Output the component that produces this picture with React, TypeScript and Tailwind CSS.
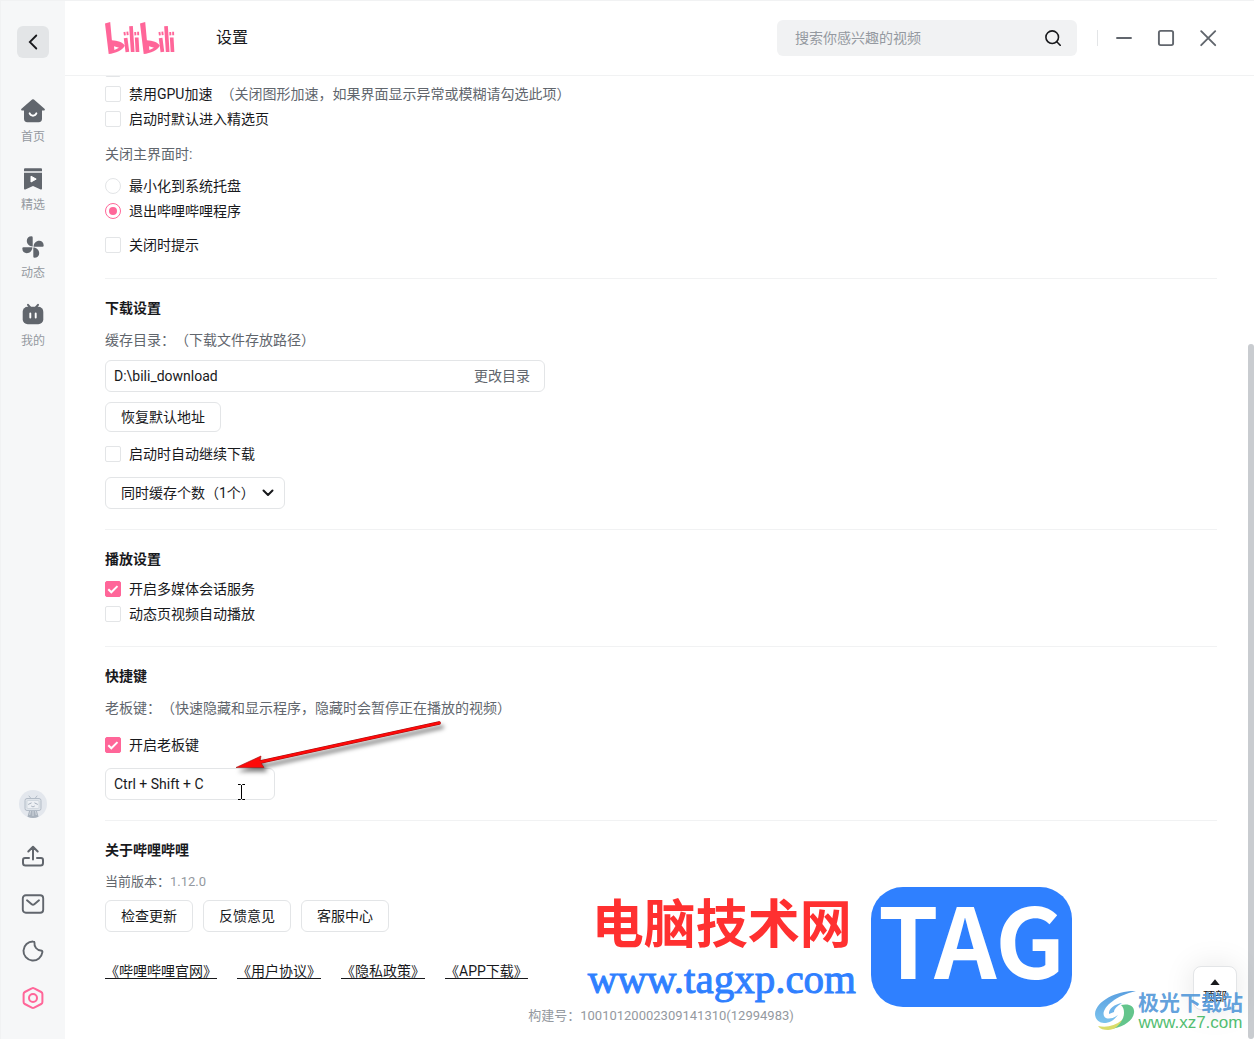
import React, { useState } from "react";

/**
 * @interface OptionProps.
 */

interface OptionProps {
  label: string;
  hint?: string;
  defaultChecked?: boolean;
}

interface RadioProps {
  label: string;
  checked: boolean;
  onSelect: () => void;
}

interface SectionProps {
  title: string;
  children: React.ReactNode;
  last?: boolean;
}

interface NavItem {
  label: string;
  icon: React.ReactNode;
}

const navItems: NavItem[] = [
  {
    label: "首页",
    icon: (
      <svg width="24" height="24" viewBox="0 0 24 24">
        <path d="M11.1 0.6a1.4 1.4 0 0 1 1.8 0l10.6 9.1c.8.7.3 1.9-.7 1.9H21v8.2a3.4 3.4 0 0 1-3.4 3.4H6.4A3.4 3.4 0 0 1 3 19.800v-8.200H1.200c-1 0-1.500-1.200-.7-1.900z" fill="#61666d" />
        <path d="M8.600 14.300a3.600 3.600 0 0 0 6.800 0" fill="none" stroke="#fff" strokeWidth="1.900" strokeLinecap="round" />
      </svg>
    ),
  },
  {
    label: "精选",
    icon: (
      <svg width="24" height="24" viewBox="0 0 24 24">
        <path d="M4 1.300h16a1 1 0 0 1 1 1v2H3v-2a1 1 0 0 1 1-1z" fill="#61666d" />
        <path d="M3 5.800h18v15.800a.9.9 0 0 1-1.300.8L12 19l-7.700 3.400a.9.9 0 0 1-1.300-.8z" fill="#61666d" />
        <path d="M10 9.200l5.200 2.900L10 15z" fill="#fff" stroke="#fff" strokeLinejoin="round" />
      </svg>
    ),
  },
  {
    label: "动态",
    icon: (
      <svg width="24" height="24" viewBox="0 0 24 24" fill="#61666d">
        <path d="M11.700 11.400V2.500a1.200 1.200 0 0 0-1.200-1.200C7.600 1.300 5.800 3.300 5.800 5.700c0 3.200 2.600 5.700 5.900 5.700z" />
        <path d="M12.600 11.700h8.900a1.200 1.200 0 0 0 1.200-1.200c0-2.900-2-4.700-4.400-4.700-3.200 0-5.700 2.600-5.700 5.900z" />
        <path d="M12.300 12.600v8.900a1.200 1.200 0 0 0 1.200 1.200c2.900 0 4.700-2 4.700-4.400 0-3.200-2.600-5.700-5.900-5.700z" />
        <path d="M11.400 12.300H2.500a1.200 1.200 0 0 0-1.200 1.200c0 2.900 2 4.700 4.400 4.700 3.200 0 5.700-2.600 5.700-5.900z" />
      </svg>
    ),
  },
  {
    label: "我的",
    icon: (
      <svg width="24" height="24" viewBox="0 0 24 24">
        <path d="M7 1.800l2.200 2.700M17 1.800l-2.200 2.700" stroke="#61666d" strokeWidth="2" strokeLinecap="round" />
        <rect x="1.700" y="3.800" width="20.600" height="17.400" rx="5" fill="#61666d" />
        <path d="M9.300 10.500v4M14.700 10.500v4" stroke="#fff" strokeWidth="1.900" strokeLinecap="round" />
      </svg>
    ),
  },
];

const Logo: React.FC = () => (
  <svg width="70" height="32" viewBox="0 0 70 32" role="img" aria-label="bilibili">
    {[0, 35].map((x) => (
      <g key={x} transform={`translate(${x} 0)`} fill="#ff6699" stroke="#ff6699">
        <path
          stroke="none"
          fillRule="evenodd"
          d="M0 1.500L5.200 0l1.700 18.300c5.500.2 11.300 2.200 12.900 5.200C18.600 27.800 10 31.600 3.700 31.900zM9 24.200l.4 3.800 4.600-2.200z"
        />
        <path d="M20.600 16l1.800 14M26 4.200l1.700 25.800M31.700 15.500l.8 14.500" strokeWidth="3.700" />
        <path d="M19.400 10l.5 3.400M22.300 9.700l.4 3.400M30.200 10l.2 3.400M33.100 9.800l.1 3.400" strokeWidth="1.900" />
      </g>
    ))}
  </svg>
);

const Option: React.FC<OptionProps> = ({ label, hint, defaultChecked }) => (
  <div className="flex h-[25px] items-center">
    <label className="flex items-center gap-2">
      <span className="grid">
        <input
          type="checkbox"
          defaultChecked={defaultChecked}
          className="peer col-start-1 row-start-1 size-4 appearance-none rounded-xs border border-[#e3e5e7] bg-white checked:border-[#ff6699] checked:bg-[#ff6699]"
        />
        <svg viewBox="0 0 16 16" className="pointer-events-none invisible col-start-1 row-start-1 size-4 peer-checked:visible">
          <path d="M3.300 8.300l3 3 6.200-6.200" fill="none" stroke="#fff" strokeWidth="2" />
        </svg>
      </span>
      <span>{label}</span>
    </label>
    {hint && <span className="ml-2 text-[#61666d]">{hint}</span>}
  </div>
);

const Radio: React.FC<RadioProps> = ({ label, checked, onSelect }) => (
  <label className="flex h-[25px] items-center gap-2">
    <span className="grid place-items-center">
      <input
        type="radio"
        name="close-action"
        checked={checked}
        onChange={onSelect}
        className="peer col-start-1 row-start-1 size-4 appearance-none rounded-full border border-[#e3e5e7] bg-white checked:border-[#ff6699]"
      />
      <span className="pointer-events-none invisible col-start-1 row-start-1 size-2 rounded-full bg-[#ff6699] peer-checked:visible" />
    </span>
    <span>{label}</span>
  </label>
);

const Section: React.FC<SectionProps> = ({ title, children, last }) => (
  <section className={last ? "pt-[17px]" : "border-b border-[#f1f2f3] pt-[17px] pb-5"}>
    <h2 className="h-6 font-bold leading-6">{title}</h2>
    {children}
  </section>
);

const Sidebar: React.FC = () => (
  <aside className="flex w-[65px] shrink-0 flex-col items-center border-l border-[#f1f2f3] bg-[#f6f7f8] pt-[25px] pb-[29px]">
    <button type="button" aria-label="返回" className="grid size-8 place-items-center rounded-md bg-[#e3e5e7]">
      <svg width="16" height="16" viewBox="0 0 16 16" fill="none" stroke="#18191c" strokeWidth="1.800" strokeLinecap="round">
        <path d="M11.300 1.500L4.800 8l6.500 6.500" />
      </svg>
    </button>
    <nav className="mt-[41px] flex flex-col gap-[22px]">
      {navItems.map(({ label, icon }) => (
        <a key={label} href="#" className="flex flex-col items-center gap-[6px] text-xs leading-4 text-[#9499a0]">
          {icon}
          {label}
        </a>
      ))}
    </nav>
    <div className="mt-auto flex flex-col items-center gap-[23px]">
      <button type="button" aria-label="头像" className="mb-1">
        <svg width="28" height="28" viewBox="0 0 28 28">
          <circle cx="14" cy="14" r="14" fill="#e3e7ed" />
          <path d="M10 6l2 2.500M18 6l-2 2.500" stroke="#b3bcc7" strokeLinecap="round" />
          <rect x="6" y="8.500" width="16" height="12" rx="2" fill="#dfe4ea" stroke="#b3bcc7" />
          <rect x="8" y="10.500" width="12" height="8" rx="1" fill="#edf0f4" stroke="#c5ccd5" strokeWidth=".6" />
          <path d="M9.500 14.300l2.700-1.300M18.500 14.300L15.800 13M12.500 16.300q.8 1 1.500 0 .8 1 1.500 0" fill="none" stroke="#a7b1be" strokeLinecap="round" />
          <path d="M10 21h8l1.500 5.800a14 14 0 0 1-11 0z" fill="#a9b2bd" />
          <path d="M11.500 21l-.8 4M14 21v5M16.500 21l.8 4" stroke="#e3e7ed" strokeWidth=".7" />
        </svg>
      </button>
      <button type="button" aria-label="上传">
        <svg width="24" height="24" viewBox="0 0 24 24" fill="none" stroke="#61666d" strokeWidth="2" strokeLinecap="round" strokeLinejoin="round">
          <path d="M12 14.500V2M7.300 6.500L12 1.800l4.700 4.700M8 13H4a2 2 0 0 0-2 2v3a2.500 2.500 0 0 0 2.500 2.500h15a2.500 2.500 0 0 0 2.500-2.500v-3a2 2 0 0 0-2-2h-4" />
        </svg>
      </button>
      <button type="button" aria-label="消息">
        <svg width="24" height="24" viewBox="0 0 24 24" fill="none" stroke="#61666d" strokeWidth="1.900" strokeLinecap="round" strokeLinejoin="round">
          <rect x="1.800" y="3.300" width="20.400" height="17.400" rx="3" />
          <path d="M6 8.300l4.700 4a2 2 0 0 0 2.600 0l4.700-4" />
        </svg>
      </button>
      <button type="button" aria-label="夜间模式">
        <svg width="24" height="24" viewBox="0 0 24 24" fill="none" stroke="#61666d" strokeWidth="1.900" strokeLinejoin="round">
          <path d="M12.200 2.500c.8 0 1.300.5 1.300 1.300a6.800 6.800 0 0 0 6.300 7.700c1.200.1 1.800.7 1.600 1.700A9.500 9.500 0 1 1 12.200 2.500z" />
        </svg>
      </button>
      <button type="button" aria-label="设置">
        <svg width="24" height="24" viewBox="0 0 24 24" fill="none" stroke="#ff6699" strokeWidth="2" strokeLinejoin="round">
          <path d="M10.800 2.300a2.400 2.400 0 0 1 2.400 0l7 3.700a2.200 2.200 0 0 1 1.200 2v8a2.200 2.200 0 0 1-1.200 2l-7 3.700a2.400 2.400 0 0 1-2.400 0l-7-3.700a2.200 2.200 0 0 1-1.200-2V8a2.200 2.200 0 0 1 1.200-2z" />
          <circle cx="12" cy="12" r="4" />
        </svg>
      </button>
    </div>
  </aside>
);

const Header: React.FC = () => (
  <header className="flex h-[75px] shrink-0 items-center border-b border-[#f1f2f3] pr-[34px] pl-10">
    <Logo />
    <h1 className="ml-[41px] text-base">设置</h1>
    <form className="ml-auto flex h-9 w-[300px] items-center rounded-md bg-[#f1f2f3] pr-4 pl-[18px]">
      <input
        type="search"
        aria-label="搜索"
        placeholder="搜索你感兴趣的视频"
        className="min-w-0 flex-1 bg-transparent outline-none placeholder:text-[#9499a0]"
      />
      <button type="button" aria-label="搜索视频">
        <svg width="16" height="16" viewBox="0 0 16 16" fill="none" stroke="#18191c" strokeWidth="1.600" strokeLinecap="round">
          <circle cx="7.200" cy="7.200" r="6.300" />
          <path d="M11.800 11.800l3.400 3.400" />
        </svg>
      </button>
    </form>
    <span className="ml-5 h-4 w-px bg-[#e3e5e7]" />
    <div className="ml-[14px] flex gap-[18px] text-[#61666d]">
      <button type="button" aria-label="最小化">
        <svg width="24" height="24" viewBox="0 0 24 24" fill="none" stroke="currentColor" strokeWidth="1.900" strokeLinecap="round">
          <path d="M5 12h14" />
        </svg>
      </button>
      <button type="button" aria-label="最大化">
        <svg width="24" height="24" viewBox="0 0 24 24" fill="none" stroke="currentColor" strokeWidth="1.900">
          <rect x="4.900" y="4.900" width="14.200" height="14.200" rx="1.800" />
        </svg>
      </button>
      <button type="button" aria-label="关闭">
        <svg width="24" height="24" viewBox="0 0 24 24" fill="none" stroke="currentColor" strokeWidth="1.900" strokeLinecap="round">
          <path d="M5.200 5.200l14 14M19.200 5.200l-14 14" />
        </svg>
      </button>
    </div>
  </header>
);

const outlineButton = "rounded-md border border-[#e3e5e7] bg-white px-[15px]";

const App: React.FC = () => {
  const [closeAction, setCloseAction] = useState("exit");

  return (
    <div className="relative flex h-screen overflow-hidden border-t border-[#f1f2f3] bg-white font-[Roboto,'Noto_Sans_CJK_SC',sans-serif] text-sm text-[#18191c] [text-spacing-trim:space-all]">
      <Sidebar />
      <div className="flex min-w-0 flex-1 flex-col">
        <Header />
        <main className="min-h-0 flex-1 overflow-hidden pr-[37px] pl-10">
          <div className="-mt-5 border-b border-[#f1f2f3] pb-[21px]">
            <Option label="" />
            <Option label="禁用GPU加速" hint="（关闭图形加速，如果界面显示异常或模糊请勾选此项）" />
            <Option label="启动时默认进入精选页" />
            <p className="mt-[11px] leading-6 text-[#61666d]">关闭主界面时:</p>
            <div className="mt-[7px]">
              <Radio label="最小化到系统托盘" checked={closeAction === "tray"} onSelect={() => setCloseAction("tray")} />
              <Radio label="退出哔哩哔哩程序" checked={closeAction === "exit"} onSelect={() => setCloseAction("exit")} />
            </div>
            <div className="mt-[9px]">
              <Option label="关闭时提示" />
            </div>
          </div>

          <Section title="下载设置">
            <p className="mt-2 leading-6 text-[#61666d]">缓存目录：（下载文件存放路径）</p>
            <div className="mt-2 flex h-8 w-[440px] items-center rounded-md border border-[#e3e5e7] pr-[14px] pl-2">
              <input
                aria-label="缓存目录"
                defaultValue="D:\bili_download"
                className="min-w-0 flex-1 outline-none"
              />
              <button type="button" className="text-[#61666d]">更改目录</button>
            </div>
            <button type="button" className={`${outlineButton} mt-[10px] block h-[30px]`}>恢复默认地址</button>
            <div className="mt-[9px]">
              <Option label="启动时自动继续下载" />
            </div>
            <div className="mt-[11px] grid w-[180px] items-center">
              <select aria-label="同时缓存个数" className={`${outlineButton} col-start-1 row-start-1 h-8 appearance-none`}>
                <option>同时缓存个数（1个）</option>
                <option>同时缓存个数（2个）</option>
                <option>同时缓存个数（3个）</option>
              </select>
              <svg width="12" height="12" viewBox="0 0 12 12" fill="none" stroke="#18191c" strokeWidth="2" strokeLinecap="round" strokeLinejoin="round" className="pointer-events-none col-start-1 row-start-1 mr-[11px] justify-self-end">
                <path d="M1.500 3.500L6 8l4.500-4.500" />
              </svg>
            </div>
          </Section>

          <Section title="播放设置">
            <div className="mt-[5px]">
              <Option label="开启多媒体会话服务" defaultChecked />
              <Option label="动态页视频自动播放" />
            </div>
          </Section>

          <Section title="快捷键">
            <p className="mt-2 leading-6 text-[#61666d]">老板键：（快速隐藏和显示程序，隐藏时会暂停正在播放的视频）</p>
            <div className="mt-3">
              <Option label="开启老板键" defaultChecked />
            </div>
            <input
              aria-label="老板键"
              defaultValue="Ctrl + Shift + C"
              className="mt-[11px] block h-8 w-[170px] rounded-md border border-[#e3e5e7] px-2 outline-none"
            />
          </Section>

          <Section title="关于哔哩哔哩" last>
            <p className="mt-2 text-[13px] leading-6 text-[#61666d]">
              当前版本：<span className="text-[#9499a0]">1.12.0</span>
            </p>
            <div className="mt-[6px] flex gap-[10px]">
              <button type="button" className={`${outlineButton} h-8`}>检查更新</button>
              <button type="button" className={`${outlineButton} h-8`}>反馈意见</button>
              <button type="button" className={`${outlineButton} h-8`}>客服中心</button>
            </div>
            <div className="mt-[27px] flex gap-5 leading-6 underline underline-offset-2">
              <a href="#">《哔哩哔哩官网》</a>
              <a href="#">《用户协议》</a>
              <a href="#">《隐私政策》</a>
              <a href="#">《APP下载》</a>
            </div>
            <p className="mt-[21px] text-center text-[13px] leading-6 text-[#9499a0]">构建号：10010120002309141310(12994983)</p>
          </Section>
        </main>
      </div>

      <div className="absolute right-0 bottom-0 h-[67%] w-1.5 rounded-full bg-[#c9ccd0]" />

      {/* red pointer and text cursor over the hotkey box */}
      <svg width="220" height="90" viewBox="0 0 220 90" className="pointer-events-none absolute top-[716px] left-[230px]">
        <g className="drop-shadow-[3px_4px_2px_rgba(0,0,0,0.5)]">
          <path d="M209 6L28 45.500" stroke="#a00c0c" strokeWidth="3.600" strokeLinecap="round" />
          <path d="M6 50.500L31 39l-1 5.500 4 6z" fill="#fd0a0a" stroke="#a00c0c" strokeWidth=".6" />
          <path d="M209 6L28 45.500" stroke="#fd0a0a" strokeWidth="2.800" strokeLinecap="round" />
        </g>
        <path d="M8 67.500h2.500l1 1 1-1H15M11.500 68v14M8 82.500h2.500l1-1 1 1H15" fill="none" stroke="#000" />
      </svg>

      <button type="button" className="absolute right-[17px] bottom-[29px] flex size-11 flex-col items-center justify-center gap-1 rounded-lg border border-[#e3e5e7] bg-white pt-2 text-xs leading-4 shadow-[0_0_30px_rgba(0,0,0,0.1)]">
        <svg width="10" height="6" viewBox="0 0 10 6">
          <path d="M5 .3L9.700 6H.3z" fill="#18191c" />
        </svg>
        顶部
      </button>

      <div className="pointer-events-none absolute right-[182px] bottom-8 flex items-start gap-[15px] font-['Noto_Sans_CJK_SC',sans-serif]">
        <div className="flex flex-col items-center pt-1">
          <span className="text-[52px] leading-[60px] font-bold text-[#ff3030]">电脑技术网</span>
          <span className="font-['Liberation_Serif',serif] text-[41px] leading-[56px] text-[#2f80ff] [-webkit-text-stroke:1px_#2f80ff]">www.tagxp.com</span>
        </div>
        <span className="h-[120px] w-[201px] rounded-[32px] bg-[#2f80ff] text-center text-[97px] leading-[100px] font-bold text-white">TAG</span>
      </div>

      <div className="pointer-events-none absolute right-[11px] bottom-[6px] flex items-center gap-px">
        <svg width="43" height="42" viewBox="0 0 43 42">
          <defs>
            <linearGradient id="swirl" x1="0" y1="0" x2="0" y2="1">
              <stop offset="0" stopColor="#5a9fe0" />
              <stop offset="1" stopColor="#7cc4ee" />
            </linearGradient>
          </defs>
          <path d="M42 1C25 0 2 10 1 24c0 5 4 9 9 9 6 0 10-3 14-8-5 4-12 5-14 1C7 19 20 6 42 1z" fill="url(#swirl)" />
          <path d="M15 24c-1-5 6-10 13-11-5 3-8 6-8 9z" fill="#6fb4ea" />
          <path d="M27 15c8-2 14 1 13 8-1 8-12 15-24 16 9-4 14-9 14-16 0-4-1-6-3-8z" fill="#63c58c" />
          <path d="M4 36c8 2 17 0 24-6-3 6-8 10-14 10-4 0-8-1-10-4z" fill="#d9dc6a" />
        </svg>
        <div className="flex flex-col items-center font-['Noto_Sans_CJK_SC',sans-serif]">
          <span className="text-[21px] leading-6 font-bold text-[#4e95d8]/90">极光下载站</span>
          <span className="font-['Liberation_Sans',sans-serif] text-[17px] leading-5 text-[#52bd71]">www.xz7.com</span>
        </div>
      </div>
    </div>
  );
};

export default App;
